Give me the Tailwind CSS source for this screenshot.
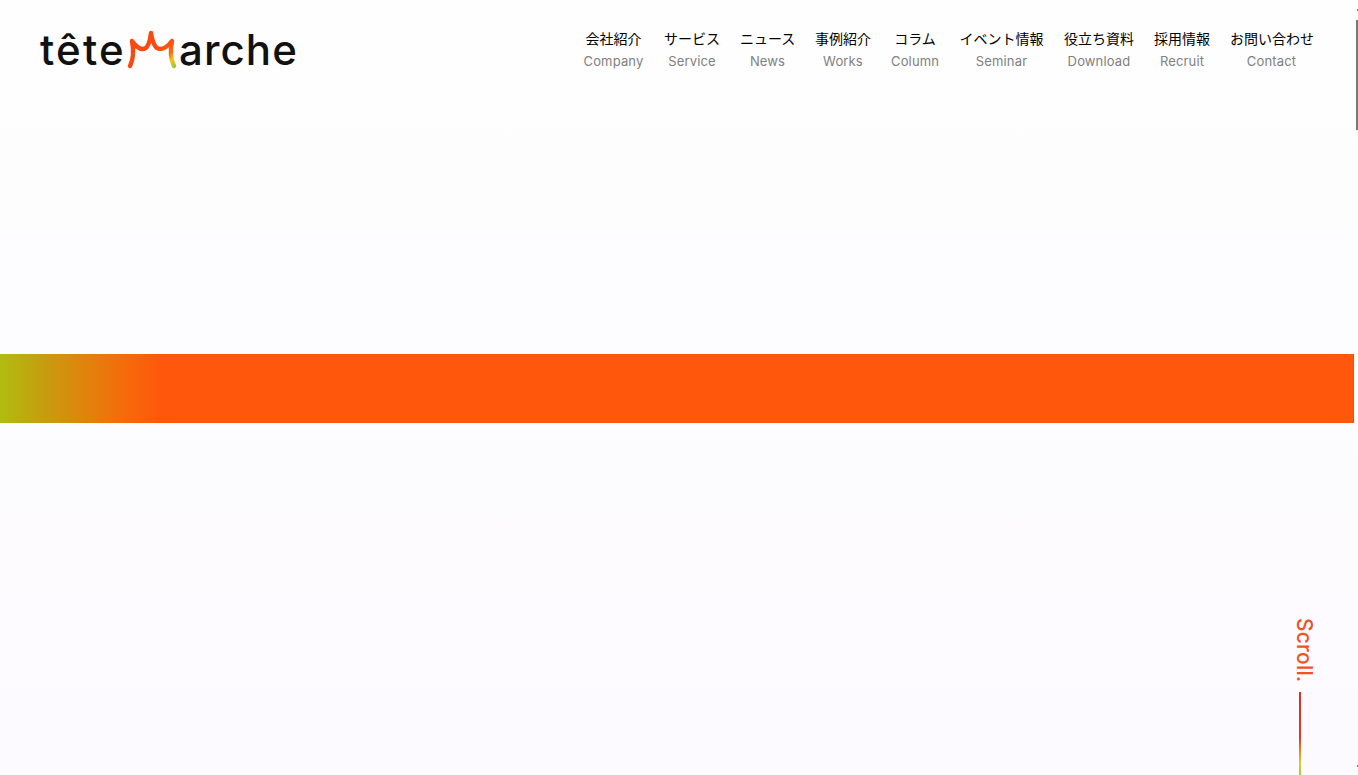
<!DOCTYPE html>
<html lang="ja">
<head>
<meta charset="utf-8">
<title>tête Marche</title>
<script src="https://cdn.jsdelivr.net/npm/@tailwindcss/browser@4"></script>
</head>
<body class="overflow-hidden">
<div class="relative flex h-[775px] w-[1358px] flex-col overflow-hidden bg-gradient-to-b from-[#fefefe] to-[#fcfafe] font-['Inter','Noto_Sans_CJK_JP',sans-serif]">
  <header class="flex h-[354px] items-start justify-between pl-[40px] pr-[45px]">
    <a class="mt-[25px] flex h-[50px] items-center text-[42px] font-medium leading-none text-[#111]">
      <span class="w-[84px] tracking-[2.2px]">tête</span>
      <svg class="h-[50px] w-[54px] shrink-0" viewBox="0 0 54 50" fill="none">
        <defs>
          <linearGradient id="m" gradientUnits="userSpaceOnUse" x1="36" y1="22" x2="50" y2="42">
            <stop offset="0" stop-color="#fa4a12"/>
            <stop offset="0.45" stop-color="#f9700f"/>
            <stop offset="0.72" stop-color="#f6c41c"/>
            <stop offset="1" stop-color="#9ccb2c"/>
          </linearGradient>
        </defs>
        <path d="M6 41C9 35 10 26 8 16C11 20 14 24 19 24C24 24 26 16 27 8C28 16 31 24 36 24C41 24 45 20 48 16C46 26 47 35 50 41" stroke="url(#m)" stroke-width="4.4" stroke-linecap="round" stroke-linejoin="round"/>
      </svg>
      <span class="ml-[1px] tracking-[1.1px]">arche</span>
    </a>
    <nav class="mt-[29px] flex gap-5 text-center">
      <a class="w-[61px]"><span class="block whitespace-nowrap text-[14px] leading-[20px] text-black">会社紹介</span><span class="mt-[2px] block whitespace-nowrap text-[13px] leading-[20px] tracking-[0.15px] text-[#808080]">Company</span></a>
      <a class="w-[56px]"><span class="block whitespace-nowrap text-[14px] leading-[20px] text-black">サービス</span><span class="mt-[2px] block whitespace-nowrap text-[13px] leading-[20px] tracking-[0.15px] text-[#808080]">Service</span></a>
      <a class="w-[55px]"><span class="block whitespace-nowrap text-[14px] leading-[20px] text-black">ニュース</span><span class="mt-[2px] block whitespace-nowrap text-[13px] leading-[20px] tracking-[0.15px] text-[#808080]">News</span></a>
      <a class="w-[56px]"><span class="block whitespace-nowrap text-[14px] leading-[20px] text-black">事例紹介</span><span class="mt-[2px] block whitespace-nowrap text-[13px] leading-[20px] tracking-[0.15px] text-[#808080]">Works</span></a>
      <a class="w-[48px]"><span class="block whitespace-nowrap text-[14px] leading-[20px] text-black">コラム</span><span class="mt-[2px] block whitespace-nowrap text-[13px] leading-[20px] tracking-[0.15px] text-[#808080]">Column</span></a>
      <a class="w-[85px]"><span class="block whitespace-nowrap text-[14px] leading-[20px] text-black">イベント情報</span><span class="mt-[2px] block whitespace-nowrap text-[13px] leading-[20px] tracking-[0.15px] text-[#808080]">Seminar</span></a>
      <a class="w-[70px]"><span class="block whitespace-nowrap text-[14px] leading-[20px] text-black">役立ち資料</span><span class="mt-[2px] block whitespace-nowrap text-[13px] leading-[20px] tracking-[0.15px] text-[#808080]">Download</span></a>
      <a class="w-[56px]"><span class="block whitespace-nowrap text-[14px] leading-[20px] text-black">採用情報</span><span class="mt-[2px] block whitespace-nowrap text-[13px] leading-[20px] tracking-[0.15px] text-[#808080]">Recruit</span></a>
      <a class="w-[83px]"><span class="block whitespace-nowrap text-[14px] leading-[20px] text-black">お問い合わせ</span><span class="mt-[2px] block whitespace-nowrap text-[13px] leading-[20px] tracking-[0.15px] text-[#808080]">Contact</span></a>
    </nav>
  </header>
  <div class="h-[69px] w-[1354px] border-r border-[#e8501a] bg-[linear-gradient(90deg,#b0bd10_0%,#c49f0f_3%,#de860c_6%,#f7680b_9.5%,#ff570b_12%,#ff570b_100%)]"></div>
  <div class="absolute left-[1294px] top-[618px] text-[21px] font-medium leading-[21px] tracking-[0.2px] text-[#f1521f] [writing-mode:vertical-rl]">Scroll.</div>
  <div class="absolute left-[1299px] top-[692px] h-[83px] w-[2px] bg-[linear-gradient(180deg,#dc2f1e_0%,#e2391c_55%,#f08a1c_72%,#e6c72a_86%,#a5cf2c_100%)]"></div>
  <div class="absolute right-0 top-[20px] h-[110px] w-[2px] bg-[#777]"></div>
  <div class="absolute right-0 top-[9px] h-[2px] w-[1px] bg-[#777]"></div>
  <div class="absolute right-0 top-[765px] h-[2px] w-[1px] bg-[#777]"></div>
</div>
</body>
</html>
